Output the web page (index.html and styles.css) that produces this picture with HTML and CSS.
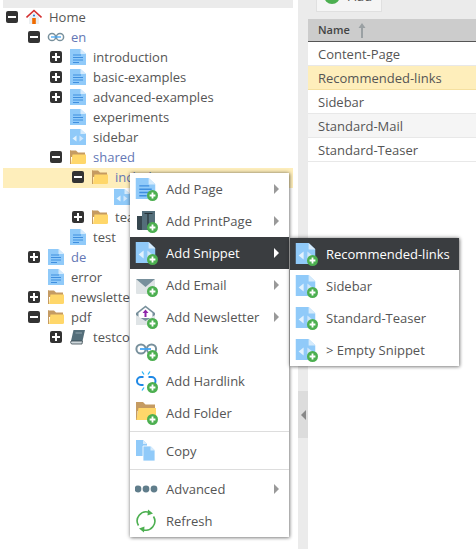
FILE: index.html
```html
<!DOCTYPE html>
<html lang="en">
<head>
  <meta charset="UTF-8">
  <title>Documents</title>
  <link rel="stylesheet" href="styles.css">
</head>

<body>

  <!-- Icon sprites -->
  <svg class="sprites" width="0" height="0">
    <symbol id="i-page" viewBox="0 0 16 16" preserveAspectRatio="none">
      <path d="M0 0H10.500L16 5V16H0Z" fill="#90caf9"/>
      <path d="M10.500 0L16 5H10.500Z" fill="#d6ebfc"/>
      <path d="M3 6H11M3 8.500H13M3 11H13M3 13.500H9" stroke="#3f8fe0" stroke-width="1.100"/>
    </symbol>
    <symbol id="i-snippet" viewBox="0 0 16 16" preserveAspectRatio="none">
      <path d="M0 0H10.500L16 5V16H0Z" fill="#90caf9"/>
      <path d="M10.500 0L16 5H10.500Z" fill="#d6ebfc"/>
      <path d="M6.500 6.500V12.500L2.500 9.500Z" fill="#e3f2fd"/>
      <path d="M9.500 6.500V12.500L13.500 9.500Z" fill="#cfe6fb"/>
    </symbol>
    <symbol id="i-folder" viewBox="0 0 16 16">
      <path d="M0 1.500H6L8 3.500H15V8H0Z" fill="#c59b62"/>
      <path d="M0 1.500H1V15H0Z" fill="#c59b62"/>
      <path d="M1 15L2.500 5.500H16V13.500Q16 15 14.500 15Z" fill="#ffd76a"/>
    </symbol>
    <symbol id="i-badge" viewBox="0 0 11 11">
      <circle cx="5.500" cy="5.500" r="5.500" fill="#4caf50"/>
      <path d="M5.500 2.600V8.400M2.600 5.500H8.400" stroke="#fff" stroke-width="1.800"/>
    </symbol>
  </svg>

  <div class="layout">

    <!-- Document tree -->
    <div class="tree-panel">
      <div class="tree-head"></div>
      <ul class="tree">
        <li class="node l0">
          <span class="toggle minus"></span>
          <svg class="node-icon" viewBox="0 0 16 16"><path d="M3 8V15H13V8L8 3Z" fill="#eceff1"/><path d="M0.500 8.500L8 1.500L15.500 8.500" fill="none" stroke="#d32f2f" stroke-width="1.600"/><rect x="6.200" y="9" width="3.600" height="6" fill="#ef6c00"/><circle cx="8" cy="6.600" r="1" fill="#1976d2"/></svg>
          <span class="label">Home</span>
        </li>
        <li class="node l1">
          <span class="toggle minus"></span>
          <svg class="node-icon wide" viewBox="0 0 18 16"><circle cx="5" cy="8" r="3.600" fill="none" stroke="#78909c" stroke-width="1.500"/><circle cx="13" cy="8" r="3.600" fill="none" stroke="#78909c" stroke-width="1.500"/><path d="M4 8H14" stroke="#42a5f5" stroke-width="1.300"/></svg>
          <span class="label link">en</span>
        </li>
        <li class="node l2"><span class="toggle plus"></span><svg class="node-icon"><use href="#i-page"/></svg><span class="label">introduction</span></li>
        <li class="node l2"><span class="toggle plus"></span><svg class="node-icon"><use href="#i-page"/></svg><span class="label">basic-examples</span></li>
        <li class="node l2"><span class="toggle plus"></span><svg class="node-icon"><use href="#i-page"/></svg><span class="label">advanced-examples</span></li>
        <li class="node l2"><span class="toggle none"></span><svg class="node-icon"><use href="#i-page"/></svg><span class="label">experiments</span></li>
        <li class="node l2"><span class="toggle none"></span><svg class="node-icon"><use href="#i-snippet"/></svg><span class="label">sidebar</span></li>
        <li class="node l2"><span class="toggle minus"></span><svg class="node-icon"><use href="#i-folder"/></svg><span class="label link">shared</span></li>
        <li class="node l3 selected"><span class="toggle minus"></span><svg class="node-icon"><use href="#i-folder"/></svg><span class="label link">includes</span></li>
        <li class="node l4"><span class="toggle none"></span><svg class="node-icon"><use href="#i-snippet"/></svg><span class="label">footer</span></li>
        <li class="node l3"><span class="toggle plus"></span><svg class="node-icon"><use href="#i-folder"/></svg><span class="label">teasers</span></li>
        <li class="node l2"><span class="toggle none"></span><svg class="node-icon"><use href="#i-page"/></svg><span class="label">test</span></li>
        <li class="node l1"><span class="toggle plus"></span><svg class="node-icon"><use href="#i-page"/></svg><span class="label link">de</span></li>
        <li class="node l1"><span class="toggle none"></span><svg class="node-icon"><use href="#i-page"/></svg><span class="label">error</span></li>
        <li class="node l1"><span class="toggle plus"></span><svg class="node-icon"><use href="#i-folder"/></svg><span class="label">newsletter</span></li>
        <li class="node l1"><span class="toggle minus"></span><svg class="node-icon"><use href="#i-folder"/></svg><span class="label">pdf</span></li>
        <li class="node l2">
          <span class="toggle plus"></span>
          <svg class="node-icon" viewBox="0 0 16 16"><path d="M3.500 1H15L12.500 12H1Z" fill="#546e7a"/><path d="M1 12H12.500L12 15H1.500Q0 13.500 1 12Z" fill="#cfd8dc" stroke="#37474f" stroke-width="0.800"/><path d="M5.500 4H12" stroke="#90a4ae"/></svg>
          <span class="label">testcontent</span>
        </li>
      </ul>
    </div>

    <!-- Splitter -->
    <div class="splitter">
      <div class="split-handle"><span class="split-arrow"></span></div>
    </div>

    <!-- Document list -->
    <div class="list-panel">
      <div class="toolbar">
        <div class="add-btn">
          <svg class="add-icon" viewBox="0 0 16 16"><circle cx="8" cy="8" r="8" fill="#4caf50"/><path d="M8 4V12M4 8H12" stroke="#fff" stroke-width="2"/></svg>
          <span class="add-text">Add</span>
        </div>
      </div>
      <table class="doc-table">
        <thead>
          <tr>
            <th>Name <svg class="sort-arrow" viewBox="0 0 8 15"><path d="M4 0L7.500 5H5V15H3V5H0.500Z" fill="#9aa0a3"/></svg></th>
          </tr>
        </thead>
        <tbody>
          <tr><td>Content-Page</td></tr>
          <tr class="current"><td>Recommended-links</td></tr>
          <tr><td>Sidebar</td></tr>
          <tr class="alt"><td>Standard-Mail</td></tr>
          <tr><td>Standard-Teaser</td></tr>
        </tbody>
      </table>
    </div>

  </div>

  <!-- Context menu -->
  <ul class="menu main-menu">
    <li class="item sub">
      <svg class="item-icon" viewBox="0 0 24 24"><use href="#i-page" x="0.500" y="1" width="20" height="21"/><use href="#i-badge" x="12" y="13" width="11" height="11"/></svg>
      Add Page
    </li>
    <li class="item sub">
      <svg class="item-icon" viewBox="0 0 24 24"><path d="M2 7H8V21H3.500Q2 21 2 19.500Z" fill="#37474f"/><rect x="7" y="2" width="13" height="19" fill="#546e7a"/><path d="M9.500 4.500H17.500M13 4.500V21" stroke="#263238" stroke-width="1.200"/><use href="#i-badge" x="12" y="13" width="11" height="11"/></svg>
      Add PrintPage
    </li>
    <li class="item sub active">
      <svg class="item-icon" viewBox="0 0 24 24"><use href="#i-snippet" x="0.500" y="1" width="20" height="21"/><use href="#i-badge" x="12" y="13" width="11" height="11"/></svg>
      Add Snippet
    </li>
    <li class="item sub">
      <svg class="item-icon" viewBox="0 0 24 24"><rect x="1" y="6" width="19" height="15" rx="1" fill="#dfe4e6"/><path d="M1 6H20L10.500 14Z" fill="#78909c"/><use href="#i-badge" x="12" y="13" width="11" height="11"/></svg>
      Add Email
    </li>
    <li class="item sub">
      <svg class="item-icon" viewBox="0 0 24 24"><path d="M1 8L10.500 0.500L20 8V20H1Z" fill="#78909c"/><path d="M3.500 8L10.500 2.500L17.500 8V13H3.500Z" fill="#fff"/><path d="M1 10L10.500 16L20 10V20H1Z" fill="#dfe4e6"/><path d="M10.500 4.500L13.500 8H11.500V12H9.500V8H7.500Z" fill="#8e24aa"/><use href="#i-badge" x="12" y="13" width="11" height="11"/></svg>
      Add Newsletter
    </li>
    <li class="item">
      <svg class="item-icon" viewBox="0 0 24 24"><circle cx="6" cy="12" r="4.600" fill="none" stroke="#78909c" stroke-width="2"/><circle cx="16.500" cy="12" r="4.600" fill="none" stroke="#78909c" stroke-width="2"/><path d="M5 12H16" stroke="#42a5f5" stroke-width="1.800"/><use href="#i-badge" x="12" y="13" width="11" height="11"/></svg>
      Add Link
    </li>
    <li class="item">
      <svg class="item-icon" viewBox="0 0 24 24"><path d="M8.500 8H6A4 4 0 0 0 6 16H8.500M13.500 8H16.500A4 4 0 0 1 16.500 16H13.500" fill="none" stroke="#1e88e5" stroke-width="2"/><path d="M7 2.500L9 5.500M15 2.500L13 5.500M7 21.500L9 18.500" stroke="#29b6f6" stroke-width="1.300"/><use href="#i-badge" x="12" y="13" width="11" height="11"/></svg>
      Add Hardlink
    </li>
    <li class="item">
      <svg class="item-icon" viewBox="0 0 24 24"><path d="M1 1H8L10.500 3.500H20V10H1Z" fill="#c59b62"/><path d="M1 1H2.500V19H1Z" fill="#c59b62"/><path d="M1.500 19L3.500 7H21V17.500Q21 19 19.500 19Z" fill="#ffd76a"/><use href="#i-badge" x="12" y="13" width="11" height="11"/></svg>
      Add Folder
    </li>
    <li class="sep"></li>
    <li class="item">
      <svg class="item-icon" viewBox="0 0 24 24"><path d="M1 1H8L12 5V17H1Z" fill="#90caf9"/><path d="M8 1L12 5H8Z" fill="#d6ebfc"/><path d="M8 7H15.500L20 11.500V22H8Z" fill="#90caf9" stroke="#fff" stroke-width="0.800"/><path d="M15.500 7L20 11.500H15.500Z" fill="#d6ebfc"/></svg>
      Copy
    </li>
    <li class="sep"></li>
    <li class="item sub">
      <svg class="item-icon" viewBox="0 0 24 24"><circle cx="3" cy="12" r="3.400" fill="#607d8b"/><circle cx="11" cy="12" r="3.400" fill="#607d8b"/><circle cx="19" cy="12" r="3.400" fill="#607d8b"/></svg>
      Advanced
    </li>
    <li class="item">
      <svg class="item-icon" viewBox="0 0 24 24"><path d="M3.500 16.500A9 9 0 0 1 14 3.300M18.500 7.500A9 9 0 0 1 8 20.700" fill="none" stroke="#4caf50" stroke-width="1.600"/><path d="M13 0.500L18 4.500L12.500 6.500ZM9 23.500L4 19.500L9.500 17.500Z" fill="#4caf50"/></svg>
      Refresh
    </li>
  </ul>

  <!-- Snippet submenu -->
  <ul class="menu sub-menu">
    <li class="item active">
      <svg class="item-icon" viewBox="0 0 24 24"><use href="#i-snippet" x="0.500" y="1" width="20" height="21"/><use href="#i-badge" x="12" y="13" width="11" height="11"/></svg>
      Recommended-links
    </li>
    <li class="item">
      <svg class="item-icon" viewBox="0 0 24 24"><use href="#i-snippet" x="0.500" y="1" width="20" height="21"/><use href="#i-badge" x="12" y="13" width="11" height="11"/></svg>
      Sidebar
    </li>
    <li class="item">
      <svg class="item-icon" viewBox="0 0 24 24"><use href="#i-snippet" x="0.500" y="1" width="20" height="21"/><use href="#i-badge" x="12" y="13" width="11" height="11"/></svg>
      Standard-Teaser
    </li>
    <li class="item">
      <svg class="item-icon" viewBox="0 0 24 24"><use href="#i-snippet" x="0.500" y="1" width="20" height="21"/><use href="#i-badge" x="12" y="13" width="11" height="11"/></svg>
      &gt; Empty Snippet
    </li>
  </ul>

</body>
</html>
```

FILE: styles.css
```css
* {
  box-sizing: border-box;
}

html, body {
  height: 100%;
}

body {
  margin: 0;
  overflow: hidden;
  background: #fff;
  color: #555;
  font-family: "Open Sans", sans-serif;
  font-size: 13px;
}

ul {
  list-style: none;
  margin: 0;
  padding: 0;
}

.sprites {
  position: absolute;
}

.layout {
  display: flex;
  height: 100%;
}

/* Tree */
.tree-panel {
  flex: 0 0 298px;
  padding: 0 5px 0 3px;
  overflow: hidden;
}

.tree-head {
  height: 8px;
  background: #ebebeb;
}

.node {
  display: flex;
  align-items: center;
  height: 20px;
  padding-bottom: 2px;
  white-space: nowrap;
}

.l0 { padding-left: 3px; }
.l1 { padding-left: 25px; }
.l2 { padding-left: 47px; }
.l3 { padding-left: 69px; }
.l4 { padding-left: 91px; }

.selected {
  background: #feeebb;
}

.toggle {
  position: relative;
  flex: 0 0 12px;
  height: 12px;
  margin-right: 8px;
  border-radius: 2px;
  background: #333;
}

.toggle.none {
  background: none;
}

.minus::before, .plus::before {
  content: "";
  position: absolute;
  left: 2px;
  top: 5px;
  width: 8px;
  height: 2px;
  background: #fff;
}

.plus::after {
  content: "";
  position: absolute;
  left: 5px;
  top: 2px;
  width: 2px;
  height: 8px;
  background: #fff;
}

.node-icon {
  flex: 0 0 16px;
  width: 16px;
  height: 16px;
  margin-right: 7px;
}

.node-icon.wide {
  flex-basis: 18px;
  width: 18px;
  margin-left: -1px;
  margin-right: 6px;
}

.label {
  line-height: 18px;
}

.link {
  color: #6477b5;
}

/* Splitter */
.splitter {
  flex: 0 0 10px;
  padding-top: 391px;
  background: #ebebeb;
}

.split-handle {
  display: flex;
  align-items: center;
  justify-content: center;
  height: 47px;
  background: #dcdcdc;
}

.split-arrow {
  width: 0;
  height: 0;
  border-top: 5px solid transparent;
  border-bottom: 5px solid transparent;
  border-right: 5px solid #888;
}

/* Document list */
.list-panel {
  flex: 1;
  min-width: 0;
}

.toolbar {
  height: 19px;
  padding-left: 8px;
  background: #ebebeb;
}

/* the button is scrolled mostly out of view, only its foot shows */
.add-btn {
  display: flex;
  align-items: flex-start;
  gap: 8px;
  width: 66px;
  height: 12px;
  padding-left: 7px;
  overflow: hidden;
  border: 1px solid #e0e0e0;
  border-top: 0;
  background: #f5f5f5;
}

.add-icon {
  flex: none;
  width: 16px;
  height: 16px;
  margin-top: -12px;
}

.add-text {
  margin-top: -12px;
  line-height: 16px;
}

.doc-table {
  width: 100%;
  border-collapse: separate;
  border-spacing: 0;
}

.doc-table th {
  height: 23px;
  padding: 0 10px;
  border-bottom: 1px solid #555;
  background: #ccc;
  color: #444;
  font-size: 11px;
  font-weight: 600;
  text-align: left;
}

.sort-arrow {
  width: 8px;
  height: 15px;
  margin-left: 5px;
  vertical-align: middle;
}

.doc-table td {
  height: 24px;
  padding: 0 10px;
  border-bottom: 1px solid #e8e8e8;
}

.alt td {
  background: #f5f5f5;
}

.current td {
  background: #feeebb;
  border-bottom-color: #f5e0a0;
}

/* Context menus */
.menu {
  position: absolute;
  background: #fff;
  box-shadow: 0 0 4px rgba(0, 0, 0, 0.45), 1px 1px 3px rgba(0, 0, 0, 0.25);
}

.main-menu {
  left: 130px;
  top: 173px;
  width: 159px;
}

.sub-menu {
  left: 290px;
  top: 238px;
  width: 169px;
}

.item {
  position: relative;
  display: flex;
  align-items: center;
  gap: 7px;
  height: 32px;
  padding-left: 5px;
  white-space: nowrap;
}

.item-icon {
  flex: none;
  width: 24px;
  height: 24px;
}

.sub::after {
  content: "";
  position: absolute;
  right: 10px;
  top: 11px;
  border-top: 5px solid transparent;
  border-bottom: 5px solid transparent;
  border-left: 5px solid #999;
}

.active {
  background: #3a3d40;
  color: #fff;
}

.active.sub::after {
  border-left-color: #fff;
}

.sep {
  height: 1px;
  margin: 2px 0 3px;
  background: #ddd;
}
```
